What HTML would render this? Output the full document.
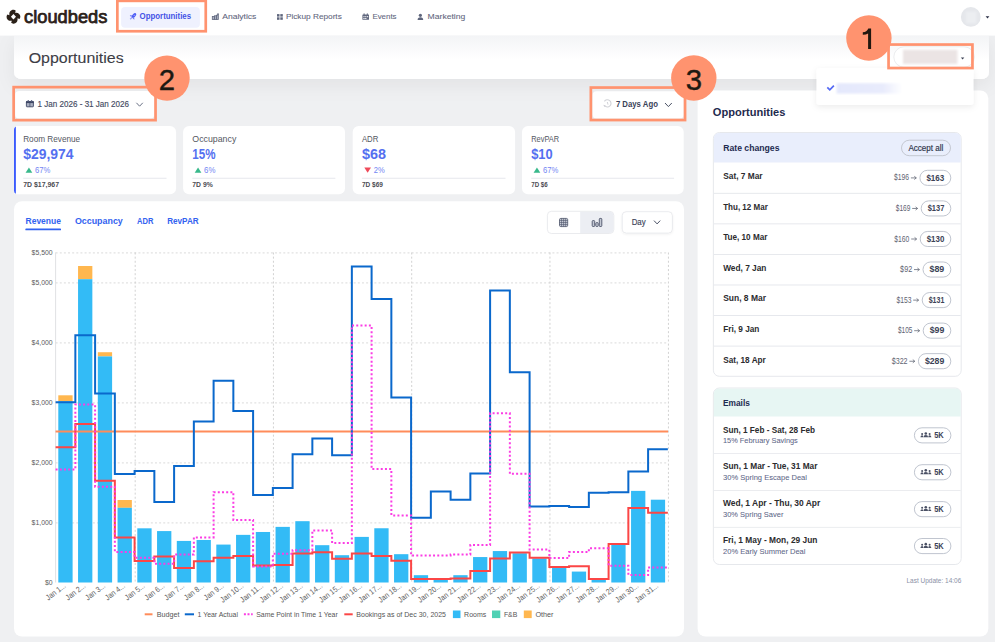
<!DOCTYPE html>
<html><head><meta charset="utf-8"><title>Opportunities</title>
<style>
html,body{margin:0;padding:0;background:#eff0f2;width:995px;height:642px;overflow:hidden;}
svg{display:block;font-family:"Liberation Sans", sans-serif;}
text{font-family:"Liberation Sans", sans-serif;}
</style></head>
<body>
<svg width="995" height="642" viewBox="0 0 995 642">
<defs><linearGradient id="hdrg" x1="0" y1="0" x2="0" y2="1"><stop offset="0" stop-color="#f3f4f6"/><stop offset="0.55" stop-color="#ffffff"/><stop offset="1" stop-color="#ffffff"/></linearGradient><linearGradient id="leftg" x1="0" y1="0" x2="0" y2="1"><stop offset="0" stop-color="#e9eaed"/><stop offset="1" stop-color="#eef0f3"/></linearGradient><linearGradient id="blurb" x1="0" y1="0" x2="1" y2="0"><stop offset="0" stop-color="#e4e8fc"/><stop offset="0.7" stop-color="#e8ebfc"/><stop offset="1" stop-color="#ffffff"/></linearGradient><filter id="sh1" x="-20%" y="-40%" width="140%" height="200%"><feDropShadow dx="0" dy="2" stdDeviation="3" flood-color="#000" flood-opacity="0.08"/></filter><filter id="sh2" x="-10%" y="-10%" width="120%" height="130%"><feDropShadow dx="0" dy="1" stdDeviation="1" flood-color="#000" flood-opacity="0.06"/></filter><filter id="shh" x="-5%" y="-50%" width="110%" height="250%"><feDropShadow dx="0" dy="6" stdDeviation="9" flood-color="#000" flood-opacity="0.06"/></filter><filter id="bl1"><feGaussianBlur stdDeviation="1.2"/></filter></defs>
<rect x="0.00" y="0.00" width="995.00" height="642.00" fill="#eff0f2" />
<path d="M14,35.6 H989 V71 Q989,79 981,79 H22 Q14,79 14,71 Z" fill="#fff" filter="url(#shh)"/>
<rect x="0.00" y="0.00" width="995.00" height="35.60" fill="#ffffff" />
<path d="M14,35.6 H989 V71 Q989,79 981,79 H22 Q14,79 14,71 Z" fill="url(#hdrg)"/>
<path transform="translate(13.45,16.75)" fill="#2b2119" fill-rule="evenodd" d="M-4.06,-2.0 C-4.50,-4.60 -2.60,-7.00 0.10,-6.90 C1.00,-6.85 1.80,-6.50 2.30,-6.00 L1.60,-4.10 L2.00,-4.06 C4.60,-4.50 7.00,-2.60 6.90,0.10 C6.85,1.00 6.50,1.80 6.00,2.30 L4.10,1.60 L4.06,2.00 C4.50,4.60 2.60,7.00 -0.10,6.90 C-1.00,6.85 -1.80,6.50 -2.30,6.00 L-1.60,4.10 L-2.00,4.06 C-4.60,4.50 -7.00,2.60 -6.90,-0.10 C-6.85,-1.00 -6.50,-1.80 -6.00,-2.30 L-4.10,-1.60 Z M0,-2.75 L2.55,0 L0,2.75 L-2.55,0 Z"/>
<text x="24.10" y="22.90" font-size="17.80" fill="#2b2119" textLength="83.30" lengthAdjust="spacingAndGlyphs" stroke="#2b2119" stroke-width="0.75" >cloudbeds</text>
<rect x="121.10" y="7.00" width="78.80" height="20.70" fill="#eff1fe" rx="4" />
<g transform="translate(132.9,16.6)"><ellipse cx="1.0" cy="-1.0" rx="3.0" ry="1.55" transform="rotate(-45 1.0 -1.0)" fill="#4d5cf5"/><path d="M-0.9,-1.3 L-3.1,-1.5 L-1.9,0.3 Z M1.3,0.9 L1.5,3.1 L-0.3,1.9 Z" fill="#6f7cf6"/><path d="M-0.6,0.6 L-2.7,2.7" stroke="#9aa3f8" stroke-width="1.3"/><circle cx="1.3" cy="-1.3" r="0.55" fill="#c9cffc"/></g>
<text x="139.60" y="19.40" font-size="8.60" fill="#4453e6" font-weight="bold" textLength="51.50" lengthAdjust="spacingAndGlyphs" >Opportunities</text>
<g fill="#aab0c0" stroke="#5f667d" stroke-width="0.8"><rect x="212.3" y="16.5" width="2.2" height="3.0"/><rect x="214.5" y="15.8" width="2.0" height="3.7"/><rect x="216.5" y="15.2" width="1.8" height="4.3"/></g><circle cx="218.0" cy="14.2" r="0.9" fill="#5f667d"/>
<text x="222.20" y="19.40" font-size="8.00" fill="#5f667d" textLength="34.20" lengthAdjust="spacingAndGlyphs" stroke="#5f667d" stroke-width="0.08" >Analytics</text>
<g fill="#5f667d"><rect x="277" y="14.1" width="2.5" height="2.5"/><rect x="280.3" y="14.1" width="2.5" height="2.5"/><rect x="277" y="17.3" width="2.5" height="2.5"/><rect x="280.3" y="17.3" width="2.5" height="2.5"/></g>
<text x="285.90" y="19.40" font-size="8.00" fill="#5f667d" textLength="55.90" lengthAdjust="spacingAndGlyphs" stroke="#5f667d" stroke-width="0.08" >Pickup Reports</text>
<g fill="#5f667d"><rect x="362.4" y="14.4" width="6.6" height="5.4" rx="0.6"/><rect x="363.6" y="13.4" width="1" height="1.6"/><rect x="366.8" y="13.4" width="1" height="1.6"/></g><g fill="#fff"><rect x="363.4" y="16.2" width="1.2" height="1"/><rect x="365.2" y="16.2" width="1.2" height="1"/><rect x="367" y="16.2" width="1.2" height="1"/><rect x="363.4" y="18" width="1.2" height="1"/><rect x="365.2" y="18" width="1.2" height="1"/></g>
<text x="372.40" y="19.40" font-size="8.00" fill="#5f667d" textLength="24.20" lengthAdjust="spacingAndGlyphs" stroke="#5f667d" stroke-width="0.08" >Events</text>
<g fill="#5f667d"><circle cx="420.4" cy="15.3" r="1.6"/><path d="M417.6,19.9 Q417.6,17.2 420.4,17.2 Q423.2,17.2 423.2,19.9 Z"/></g>
<text x="427.60" y="19.40" font-size="8.00" fill="#5f667d" textLength="37.70" lengthAdjust="spacingAndGlyphs" stroke="#5f667d" stroke-width="0.08" >Marketing</text>
<circle cx="970.8" cy="16.9" r="9.9" fill="#e5e7eb"/>
<rect x="966" y="11.5" width="10.5" height="12" fill="#eceef1" filter="url(#bl1)"/>
<path d="M985.6,16.3 L989.4,16.3 L987.5,18.6 Z" fill="#2a2f45"/>
<text x="28.70" y="62.90" font-size="14.30" fill="#3d3d45" textLength="95.00" lengthAdjust="spacingAndGlyphs" stroke="#3d3d45" stroke-width="0.1" >Opportunities</text>
<rect x="893.8" y="46.8" width="80.5" height="20.4" rx="10.2" fill="#ffffff" stroke="#e6e7ea" stroke-width="0.8"/>
<rect x="903" y="49.8" width="54.4" height="14.1" fill="#ebe4e4" filter="url(#bl1)"/>
<path d="M960.9,57.6 L964.3,57.6 L962.6,59.6 Z" fill="#3a3f52"/>
<rect x="15.20" y="91.00" width="139.00" height="27.60" fill="#ffffff" rx="4" filter="url(#sh2)"/>
<rect x="26.4" y="101.6" width="7.0" height="5.2" rx="0.5" fill="#a9afc0" stroke="#3f4866" stroke-width="0.9"/><rect x="26.0" y="101.2" width="7.8" height="1.9" fill="#3f4866"/><path d="M29.9,103 V106.8" stroke="#3f4866" stroke-width="0.7"/><rect x="27.6" y="100.0" width="1.3" height="1.4" fill="#6b7390"/><rect x="30.9" y="100.0" width="1.3" height="1.4" fill="#6b7390"/>
<text x="37.60" y="106.70" font-size="8.20" fill="#454c63" textLength="91.40" lengthAdjust="spacingAndGlyphs" stroke="#454c63" stroke-width="0.15" >1 Jan 2026 - 31 Jan 2026</text>
<path d="M136.4,102.8 L139.6,106.2 L142.8,102.8" fill="none" stroke="#6a7185" stroke-width="1"/>
<rect x="592.60" y="91.30" width="91.00" height="27.10" fill="#ffffff" rx="4" filter="url(#sh2)"/>
<path d="M604.4,101.4 A3.6,3.6 0 1 1 604.6,105.6" fill="none" stroke="#d2d3d8" stroke-width="1.1"/><path d="M603.2,104.8 L605.4,105.4 L604.6,107.0 Z" fill="#c8c9cf"/><path d="M607.3,102.0 L608.0,104.6" fill="none" stroke="#d2d3d8" stroke-width="1.0"/>
<text x="615.90" y="107.30" font-size="8.20" fill="#3a4259" font-weight="bold" textLength="42.00" lengthAdjust="spacingAndGlyphs" >7 Days Ago</text>
<path d="M665,103 L668.4,106.6 L671.8,103" fill="none" stroke="#4a5165" stroke-width="1"/>
<rect x="14.00" y="126.00" width="162.10" height="68.20" fill="#ffffff" rx="6" />
<text x="23.20" y="141.70" font-size="8.40" fill="#54575f" textLength="57.00" lengthAdjust="spacingAndGlyphs" >Room Revenue</text>
<text x="23.20" y="158.90" font-size="14.00" fill="#5470f0" font-weight="bold" textLength="50.30" lengthAdjust="spacingAndGlyphs" >$29,974</text>
<path d="M25.60,172.8 L28.95,167.4 L32.30,172.8 Z" fill="#38b98b"/>
<text x="35.00" y="172.80" font-size="8.50" fill="#7385f3" textLength="15.40" lengthAdjust="spacingAndGlyphs" >67%</text>
<rect x="23.20" y="177.8" width="143.30" height="0.8" fill="#dfe2e8"/>
<text x="23.20" y="186.90" font-size="7.50" fill="#4b4b52" font-weight="bold" textLength="35.80" lengthAdjust="spacingAndGlyphs" >7D $17,967</text>
<rect x="183.10" y="126.00" width="161.90" height="68.20" fill="#ffffff" rx="6" />
<text x="192.30" y="141.70" font-size="8.40" fill="#54575f" textLength="44.00" lengthAdjust="spacingAndGlyphs" >Occupancy</text>
<text x="192.30" y="158.90" font-size="14.00" fill="#5470f0" font-weight="bold" textLength="23.20" lengthAdjust="spacingAndGlyphs" >15%</text>
<path d="M194.70,172.8 L198.05,167.4 L201.40,172.8 Z" fill="#38b98b"/>
<text x="204.10" y="172.80" font-size="8.50" fill="#7385f3" textLength="11.40" lengthAdjust="spacingAndGlyphs" >6%</text>
<rect x="192.30" y="177.8" width="143.10" height="0.8" fill="#dfe2e8"/>
<text x="192.30" y="186.90" font-size="7.50" fill="#4b4b52" font-weight="bold" textLength="20.50" lengthAdjust="spacingAndGlyphs" >7D 9%</text>
<rect x="352.70" y="126.00" width="162.40" height="68.20" fill="#ffffff" rx="6" />
<text x="361.90" y="141.70" font-size="8.40" fill="#54575f" textLength="16.50" lengthAdjust="spacingAndGlyphs" >ADR</text>
<text x="361.90" y="158.90" font-size="14.00" fill="#5470f0" font-weight="bold" textLength="24.00" lengthAdjust="spacingAndGlyphs" >$68</text>
<path d="M364.30,167.6 L367.65,172.8 L371.00,167.6 Z" fill="#ef4a5a"/>
<text x="373.70" y="172.80" font-size="8.50" fill="#7385f3" textLength="11.00" lengthAdjust="spacingAndGlyphs" >2%</text>
<rect x="361.90" y="177.8" width="143.60" height="0.8" fill="#dfe2e8"/>
<text x="361.90" y="186.90" font-size="7.50" fill="#4b4b52" font-weight="bold" textLength="21.00" lengthAdjust="spacingAndGlyphs" >7D $69</text>
<rect x="522.00" y="126.00" width="161.70" height="68.20" fill="#ffffff" rx="6" />
<text x="531.20" y="141.70" font-size="8.40" fill="#54575f" textLength="28.00" lengthAdjust="spacingAndGlyphs" >RevPAR</text>
<text x="531.20" y="158.90" font-size="14.00" fill="#5470f0" font-weight="bold" textLength="21.50" lengthAdjust="spacingAndGlyphs" >$10</text>
<path d="M533.60,172.8 L536.95,167.4 L540.30,172.8 Z" fill="#38b98b"/>
<text x="543.00" y="172.80" font-size="8.50" fill="#7385f3" textLength="15.40" lengthAdjust="spacingAndGlyphs" >67%</text>
<rect x="531.20" y="177.8" width="142.90" height="0.8" fill="#dfe2e8"/>
<text x="531.20" y="186.90" font-size="7.50" fill="#4b4b52" font-weight="bold" textLength="16.50" lengthAdjust="spacingAndGlyphs" >7D $6</text>
<path d="M20,126 H16.5 Q14,126 14,128.5 V191.7 Q14,194.2 16.5,194.2 H20 Z" fill="#ffffff"/>
<path d="M15.9,126.4 Q14,127.2 14,129.5 V190.7 Q14,193.0 15.9,193.8 Z" fill="#3b5bfd"/>
<rect x="14.00" y="201.20" width="670.00" height="435.40" fill="#ffffff" rx="8" />
<text x="25.50" y="224.20" font-size="8.70" fill="#3262f0" font-weight="bold" textLength="35.50" lengthAdjust="spacingAndGlyphs" >Revenue</text>
<rect x="25.3" y="228.5" width="35.8" height="1.8" rx="0.9" fill="#3262f0"/>
<text x="74.90" y="224.20" font-size="8.70" fill="#3262f0" font-weight="bold" textLength="47.90" lengthAdjust="spacingAndGlyphs" >Occupancy</text>
<text x="137.10" y="224.20" font-size="8.70" fill="#3262f0" font-weight="bold" textLength="16.40" lengthAdjust="spacingAndGlyphs" >ADR</text>
<text x="167.20" y="224.20" font-size="8.70" fill="#3262f0" font-weight="bold" textLength="31.50" lengthAdjust="spacingAndGlyphs" >RevPAR</text>
<rect x="547.4" y="211.3" width="66.4" height="22.2" rx="4" fill="#ffffff" stroke="#e4e6ea" stroke-width="0.8"/>
<path d="M580.2,211.7 H609.8 Q613.4,211.7 613.4,215.3 V229.5 Q613.4,233.1 609.8,233.1 H580.2 Z" fill="#eceef3"/>
<rect x="559.5" y="218.4" width="8.2" height="8.2" rx="1.3" fill="#c9cdd7" stroke="#4d546a" stroke-width="0.8"/><path d="M561.55,218.4 V226.6 M563.6,218.4 V226.6 M565.65,218.4 V226.6 M559.5,220.45 H567.7 M559.5,222.5 H567.7 M559.5,224.55 H567.7" stroke="#4d546a" stroke-width="0.6"/>
<g fill="#c3c8d3" stroke="#4d546a" stroke-width="0.9"><rect x="592.2" y="220.6" width="2.5" height="5.9" rx="0.8"/><rect x="595.8" y="222.6" width="2.4" height="3.9" rx="0.8"/><rect x="599.3" y="218.4" width="2.5" height="8.1" rx="0.8"/></g>
<rect x="622.2" y="211.7" width="50.2" height="21.4" rx="4" fill="#ffffff" stroke="#e4e6ea" stroke-width="0.8" filter="url(#sh2)"/>
<text x="631.70" y="224.50" font-size="8.20" fill="#3d4459" textLength="14.00" lengthAdjust="spacingAndGlyphs" stroke="#3d4459" stroke-width="0.15" >Day</text>
<path d="M654,220.6 L657.1,223.9 L660.2,220.6" fill="none" stroke="#4a5165" stroke-width="1"/>
<path d="M55.60,522.90 H668" stroke="#e2e2e2" stroke-width="1.3" stroke-dasharray="2,2.14"/>
<path d="M55.60,462.90 H668" stroke="#e2e2e2" stroke-width="1.3" stroke-dasharray="2,2.14"/>
<path d="M55.60,402.90 H668" stroke="#e2e2e2" stroke-width="1.3" stroke-dasharray="2,2.14"/>
<path d="M55.60,342.90 H668" stroke="#e2e2e2" stroke-width="1.3" stroke-dasharray="2,2.14"/>
<path d="M55.60,282.90 H668" stroke="#e2e2e2" stroke-width="1.3" stroke-dasharray="2,2.14"/>
<path d="M55.60,252.90 H668" stroke="#e2e2e2" stroke-width="1.3" stroke-dasharray="2,2.14"/>
<path d="M135.20,252.50 V582.50" stroke="#cdcdcd" stroke-width="0.9" stroke-dasharray="2,2.14"/>
<path d="M273.45,252.50 V582.50" stroke="#cdcdcd" stroke-width="0.9" stroke-dasharray="2,2.14"/>
<path d="M411.70,252.50 V582.50" stroke="#cdcdcd" stroke-width="0.9" stroke-dasharray="2,2.14"/>
<path d="M549.95,252.50 V582.50" stroke="#cdcdcd" stroke-width="0.9" stroke-dasharray="2,2.14"/>
<path d="M668.45,252.50 V582.50" stroke="#cdcdcd" stroke-width="0.9" stroke-dasharray="2,2.14"/>
<path d="M55.60,252.50 V582.50" stroke="#d8d9dc" stroke-width="0.8"/>
<text x="52.60" y="585.00" font-size="7.00" fill="#5a5a5a" text-anchor="end" textLength="7.60" lengthAdjust="spacingAndGlyphs" >$0</text>
<text x="52.60" y="525.00" font-size="7.00" fill="#5a5a5a" text-anchor="end" textLength="21.00" lengthAdjust="spacingAndGlyphs" >$1,000</text>
<text x="52.60" y="465.00" font-size="7.00" fill="#5a5a5a" text-anchor="end" textLength="21.00" lengthAdjust="spacingAndGlyphs" >$2,000</text>
<text x="52.60" y="405.00" font-size="7.00" fill="#5a5a5a" text-anchor="end" textLength="21.00" lengthAdjust="spacingAndGlyphs" >$3,000</text>
<text x="52.60" y="345.00" font-size="7.00" fill="#5a5a5a" text-anchor="end" textLength="21.00" lengthAdjust="spacingAndGlyphs" >$4,000</text>
<text x="52.60" y="285.00" font-size="7.00" fill="#5a5a5a" text-anchor="end" textLength="21.00" lengthAdjust="spacingAndGlyphs" >$5,000</text>
<text x="52.60" y="255.00" font-size="7.00" fill="#5a5a5a" text-anchor="end" textLength="21.00" lengthAdjust="spacingAndGlyphs" >$5,500</text>
<rect x="58.30" y="395.30" width="14.3" height="6.00" fill="#ffb74f"/>
<rect x="58.30" y="401.30" width="14.3" height="181.20" fill="#33bbf6"/>
<rect x="78.05" y="266.00" width="14.3" height="13.20" fill="#ffb74f"/>
<rect x="78.05" y="279.20" width="14.3" height="303.30" fill="#33bbf6"/>
<rect x="97.80" y="352.22" width="14.3" height="4.20" fill="#ffb74f"/>
<rect x="97.80" y="356.42" width="14.3" height="226.08" fill="#33bbf6"/>
<rect x="117.55" y="500.00" width="14.3" height="7.80" fill="#ffb74f"/>
<rect x="117.55" y="507.80" width="14.3" height="74.70" fill="#33bbf6"/>
<rect x="137.30" y="528.32" width="14.3" height="54.18" fill="#33bbf6"/>
<rect x="157.05" y="531.08" width="14.3" height="51.42" fill="#33bbf6"/>
<rect x="176.80" y="540.92" width="14.3" height="41.58" fill="#33bbf6"/>
<rect x="196.55" y="539.96" width="14.3" height="42.54" fill="#33bbf6"/>
<rect x="216.30" y="544.58" width="14.3" height="37.92" fill="#33bbf6"/>
<rect x="236.05" y="534.86" width="14.3" height="47.64" fill="#33bbf6"/>
<rect x="255.80" y="531.98" width="14.3" height="50.52" fill="#33bbf6"/>
<rect x="275.55" y="526.88" width="14.3" height="55.62" fill="#33bbf6"/>
<rect x="295.30" y="521.18" width="14.3" height="61.32" fill="#33bbf6"/>
<rect x="315.05" y="545.18" width="14.3" height="37.32" fill="#33bbf6"/>
<rect x="334.80" y="555.20" width="14.3" height="27.30" fill="#33bbf6"/>
<rect x="354.55" y="536.90" width="14.3" height="45.60" fill="#33bbf6"/>
<rect x="374.30" y="528.26" width="14.3" height="54.24" fill="#33bbf6"/>
<rect x="394.05" y="554.18" width="14.3" height="28.32" fill="#33bbf6"/>
<rect x="413.80" y="575.18" width="14.3" height="7.32" fill="#33bbf6"/>
<rect x="433.55" y="579.62" width="14.3" height="2.88" fill="#33bbf6"/>
<rect x="453.30" y="575.18" width="14.3" height="7.32" fill="#33bbf6"/>
<rect x="473.05" y="557.06" width="14.3" height="25.44" fill="#33bbf6"/>
<rect x="492.80" y="551.06" width="14.3" height="31.44" fill="#33bbf6"/>
<rect x="512.55" y="553.22" width="14.3" height="29.28" fill="#33bbf6"/>
<rect x="532.30" y="558.38" width="14.3" height="24.12" fill="#33bbf6"/>
<rect x="552.05" y="568.04" width="14.3" height="14.46" fill="#33bbf6"/>
<rect x="571.80" y="571.58" width="14.3" height="10.92" fill="#33bbf6"/>
<rect x="591.55" y="579.98" width="14.3" height="2.52" fill="#33bbf6"/>
<rect x="611.30" y="543.92" width="14.3" height="38.58" fill="#33bbf6"/>
<rect x="631.05" y="490.88" width="14.3" height="91.62" fill="#33bbf6"/>
<rect x="650.80" y="499.70" width="14.3" height="82.80" fill="#33bbf6"/>
<path d="M55.60,431.4 H668" stroke="#ff8c5a" stroke-width="2"/>
<path d="M55.60,402.20 H75.35 V335.30 H95.10 V393.38 H114.85 V474.08 H134.60 V470.90 H154.35 V502.04 H174.10 V465.98 H193.85 V421.58 H213.60 V380.78 H233.35 V410.90 H253.10 V495.02 H272.85 V487.88 H292.60 V454.22 H312.35 V438.38 H332.10 V455.30 H351.85 V266.48 H371.60 V299.12 H391.35 V397.58 H411.10 V517.82 H430.85 V491.42 H450.60 V499.64 H470.35 V473.42 H490.10 V290.60 H509.85 V372.20 H529.60 V506.48 H549.35 V505.88 H569.10 V507.08 H588.85 V492.80 H608.60 V492.20 H628.35 V471.62 H648.10 V449.18 H667.85" fill="none" stroke="#0a68cc" stroke-width="2"/>
<path d="M55.60,447.20 H75.35 V423.98 H95.10 V480.68 H114.85 V537.38 H134.60 V561.08 H154.35 V556.58 H174.10 V568.10 H193.85 V561.32 H213.60 V557.78 H233.35 V555.92 H253.10 V565.58 H272.85 V564.92 H292.60 V553.40 H312.35 V552.32 H332.10 V558.80 H351.85 V553.40 H371.60 V555.98 H391.35 V560.72 H411.10 V579.02 H430.85 V579.02 H450.60 V578.42 H470.35 V571.10 H490.10 V558.62 H509.85 V552.56 H529.60 V557.72 H549.35 V567.02 H569.10 V566.30 H588.85 V579.08 H608.60 V543.92 H628.35 V508.10 H648.10 V512.72 H667.85" fill="none" stroke="#fb4646" stroke-width="2"/>
<path d="M55.60,469.52 H75.35 V404.60 H95.10 V486.68 H114.85 V551.90 H134.60 V557.84 H154.35 V563.72 H174.10 V554.54 H193.85 V537.38 H213.60 V492.14 H233.35 V520.04 H253.10 V566.48 H272.85 V553.82 H292.60 V550.22 H312.35 V530.48 H332.10 V543.02 H351.85 V325.58 H371.60 V469.10 H391.35 V515.42 H411.10 V555.38 H430.85 V555.38 H450.60 V554.48 H470.35 V544.94 H490.10 V413.30 H509.85 V473.78 H529.60 V549.62 H549.35 V558.02 H569.10 V552.02 H588.85 V548.18 H608.60 V565.70 H628.35 V575.00 H648.10 V567.50 H667.85" fill="none" stroke="#fb3de4" stroke-width="2" stroke-dasharray="2,2.2"/>
<text x="0" y="0" font-size="8.0" fill="#5c5c5c" text-anchor="end" textLength="22.83" lengthAdjust="spacingAndGlyphs" transform="translate(66.38,586.90) rotate(-37)">Jan 1...</text>
<text x="0" y="0" font-size="8.0" fill="#5c5c5c" text-anchor="end" textLength="22.83" lengthAdjust="spacingAndGlyphs" transform="translate(86.12,586.90) rotate(-37)">Jan 2...</text>
<text x="0" y="0" font-size="8.0" fill="#5c5c5c" text-anchor="end" textLength="22.83" lengthAdjust="spacingAndGlyphs" transform="translate(105.88,586.90) rotate(-37)">Jan 3...</text>
<text x="0" y="0" font-size="8.0" fill="#5c5c5c" text-anchor="end" textLength="22.83" lengthAdjust="spacingAndGlyphs" transform="translate(125.62,586.90) rotate(-37)">Jan 4...</text>
<text x="0" y="0" font-size="8.0" fill="#5c5c5c" text-anchor="end" textLength="22.83" lengthAdjust="spacingAndGlyphs" transform="translate(145.38,586.90) rotate(-37)">Jan 5...</text>
<text x="0" y="0" font-size="8.0" fill="#5c5c5c" text-anchor="end" textLength="22.83" lengthAdjust="spacingAndGlyphs" transform="translate(165.12,586.90) rotate(-37)">Jan 6...</text>
<text x="0" y="0" font-size="8.0" fill="#5c5c5c" text-anchor="end" textLength="22.83" lengthAdjust="spacingAndGlyphs" transform="translate(184.88,586.90) rotate(-37)">Jan 7...</text>
<text x="0" y="0" font-size="8.0" fill="#5c5c5c" text-anchor="end" textLength="22.83" lengthAdjust="spacingAndGlyphs" transform="translate(204.62,586.90) rotate(-37)">Jan 8...</text>
<text x="0" y="0" font-size="8.0" fill="#5c5c5c" text-anchor="end" textLength="22.83" lengthAdjust="spacingAndGlyphs" transform="translate(224.38,586.90) rotate(-37)">Jan 9...</text>
<text x="0" y="0" font-size="8.0" fill="#5c5c5c" text-anchor="end" textLength="26.70" lengthAdjust="spacingAndGlyphs" transform="translate(244.12,586.90) rotate(-37)">Jan 10...</text>
<text x="0" y="0" font-size="8.0" fill="#5c5c5c" text-anchor="end" textLength="26.70" lengthAdjust="spacingAndGlyphs" transform="translate(263.88,586.90) rotate(-37)">Jan 11...</text>
<text x="0" y="0" font-size="8.0" fill="#5c5c5c" text-anchor="end" textLength="26.70" lengthAdjust="spacingAndGlyphs" transform="translate(283.62,586.90) rotate(-37)">Jan 12...</text>
<text x="0" y="0" font-size="8.0" fill="#5c5c5c" text-anchor="end" textLength="26.70" lengthAdjust="spacingAndGlyphs" transform="translate(303.38,586.90) rotate(-37)">Jan 13...</text>
<text x="0" y="0" font-size="8.0" fill="#5c5c5c" text-anchor="end" textLength="26.70" lengthAdjust="spacingAndGlyphs" transform="translate(323.12,586.90) rotate(-37)">Jan 14...</text>
<text x="0" y="0" font-size="8.0" fill="#5c5c5c" text-anchor="end" textLength="26.70" lengthAdjust="spacingAndGlyphs" transform="translate(342.88,586.90) rotate(-37)">Jan 15...</text>
<text x="0" y="0" font-size="8.0" fill="#5c5c5c" text-anchor="end" textLength="26.70" lengthAdjust="spacingAndGlyphs" transform="translate(362.62,586.90) rotate(-37)">Jan 16...</text>
<text x="0" y="0" font-size="8.0" fill="#5c5c5c" text-anchor="end" textLength="26.70" lengthAdjust="spacingAndGlyphs" transform="translate(382.38,586.90) rotate(-37)">Jan 17...</text>
<text x="0" y="0" font-size="8.0" fill="#5c5c5c" text-anchor="end" textLength="26.70" lengthAdjust="spacingAndGlyphs" transform="translate(402.12,586.90) rotate(-37)">Jan 18...</text>
<text x="0" y="0" font-size="8.0" fill="#5c5c5c" text-anchor="end" textLength="26.70" lengthAdjust="spacingAndGlyphs" transform="translate(421.88,586.90) rotate(-37)">Jan 19...</text>
<text x="0" y="0" font-size="8.0" fill="#5c5c5c" text-anchor="end" textLength="26.70" lengthAdjust="spacingAndGlyphs" transform="translate(441.62,586.90) rotate(-37)">Jan 20...</text>
<text x="0" y="0" font-size="8.0" fill="#5c5c5c" text-anchor="end" textLength="26.70" lengthAdjust="spacingAndGlyphs" transform="translate(461.38,586.90) rotate(-37)">Jan 21...</text>
<text x="0" y="0" font-size="8.0" fill="#5c5c5c" text-anchor="end" textLength="26.70" lengthAdjust="spacingAndGlyphs" transform="translate(481.12,586.90) rotate(-37)">Jan 22...</text>
<text x="0" y="0" font-size="8.0" fill="#5c5c5c" text-anchor="end" textLength="26.70" lengthAdjust="spacingAndGlyphs" transform="translate(500.88,586.90) rotate(-37)">Jan 23...</text>
<text x="0" y="0" font-size="8.0" fill="#5c5c5c" text-anchor="end" textLength="26.70" lengthAdjust="spacingAndGlyphs" transform="translate(520.62,586.90) rotate(-37)">Jan 24...</text>
<text x="0" y="0" font-size="8.0" fill="#5c5c5c" text-anchor="end" textLength="26.70" lengthAdjust="spacingAndGlyphs" transform="translate(540.38,586.90) rotate(-37)">Jan 25...</text>
<text x="0" y="0" font-size="8.0" fill="#5c5c5c" text-anchor="end" textLength="26.70" lengthAdjust="spacingAndGlyphs" transform="translate(560.12,586.90) rotate(-37)">Jan 26...</text>
<text x="0" y="0" font-size="8.0" fill="#5c5c5c" text-anchor="end" textLength="26.70" lengthAdjust="spacingAndGlyphs" transform="translate(579.88,586.90) rotate(-37)">Jan 27...</text>
<text x="0" y="0" font-size="8.0" fill="#5c5c5c" text-anchor="end" textLength="26.70" lengthAdjust="spacingAndGlyphs" transform="translate(599.62,586.90) rotate(-37)">Jan 28...</text>
<text x="0" y="0" font-size="8.0" fill="#5c5c5c" text-anchor="end" textLength="26.70" lengthAdjust="spacingAndGlyphs" transform="translate(619.38,586.90) rotate(-37)">Jan 29...</text>
<text x="0" y="0" font-size="8.0" fill="#5c5c5c" text-anchor="end" textLength="26.70" lengthAdjust="spacingAndGlyphs" transform="translate(639.12,586.90) rotate(-37)">Jan 30...</text>
<text x="0" y="0" font-size="8.0" fill="#5c5c5c" text-anchor="end" textLength="26.70" lengthAdjust="spacingAndGlyphs" transform="translate(658.88,586.90) rotate(-37)">Jan 31...</text>
<path d="M144.7,614.3 H152.5" stroke="#ff8c5a" stroke-width="2"/>
<text x="156.70" y="616.90" font-size="7.40" fill="#555" textLength="22.80" lengthAdjust="spacingAndGlyphs" >Budget</text>
<path d="M184.8,614.3 H194" stroke="#0a68cc" stroke-width="2"/>
<text x="197.50" y="616.90" font-size="7.40" fill="#555" textLength="40.50" lengthAdjust="spacingAndGlyphs" >1 Year Actual</text>
<path d="M243.9,614.3 H252.7" stroke="#fb3de4" stroke-width="2" stroke-dasharray="2,1.6"/>
<text x="256.20" y="616.90" font-size="7.40" fill="#555" textLength="81.60" lengthAdjust="spacingAndGlyphs" >Same Point in Time 1 Year</text>
<path d="M344.3,614.3 H352.7" stroke="#fb4646" stroke-width="2"/>
<text x="356.30" y="616.90" font-size="7.40" fill="#555" textLength="89.70" lengthAdjust="spacingAndGlyphs" >Bookings as of Dec 30, 2025</text>
<rect x="452.90" y="610.50" width="7.60" height="7.60" fill="#33bbf6" />
<text x="464.10" y="616.90" font-size="7.40" fill="#555" textLength="22.10" lengthAdjust="spacingAndGlyphs" >Rooms</text>
<rect x="492.00" y="610.50" width="8.30" height="7.60" fill="#4fd1b4" />
<text x="503.90" y="616.90" font-size="7.40" fill="#555" textLength="13.40" lengthAdjust="spacingAndGlyphs" >F&amp;B</text>
<rect x="523.80" y="610.50" width="7.90" height="7.60" fill="#ffb74f" />
<text x="535.40" y="616.90" font-size="7.40" fill="#555" textLength="18.10" lengthAdjust="spacingAndGlyphs" >Other</text>
<rect x="697.60" y="90.40" width="290.70" height="546.20" fill="#ffffff" rx="8" />
<text x="712.80" y="115.50" font-size="11.60" fill="#1e2a4d" font-weight="bold" textLength="72.50" lengthAdjust="spacingAndGlyphs" >Opportunities</text>
<rect x="713.4" y="132.5" width="247.8" height="243.8" rx="6" fill="#ffffff" stroke="#e3e5ea" stroke-width="0.9"/>
<path d="M713.85,162.4 V138.5 Q713.85,132.95 719.4,132.95 H955.2 Q960.75,132.95 960.75,138.5 V162.4 Z" fill="#e9eefc"/>
<text x="723.20" y="150.90" font-size="9.00" fill="#1e2b50" font-weight="bold" textLength="56.30" lengthAdjust="spacingAndGlyphs" >Rate changes</text>
<rect x="901.5" y="140.2" width="49" height="15.5" rx="7.75" fill="none" stroke="#bfc3cc" stroke-width="0.9"/>
<text x="908.40" y="150.50" font-size="8.20" fill="#2d3448" textLength="35.00" lengthAdjust="spacingAndGlyphs" stroke="#2d3448" stroke-width="0.15" >Accept all</text>
<text x="723.20" y="179.20" font-size="8.70" fill="#2b2b2e" font-weight="bold" textLength="39.40" lengthAdjust="spacingAndGlyphs" >Sat, 7 Mar</text>
<rect x="919.90" y="170.30" width="30.90" height="15.1" rx="7.55" fill="none" stroke="#b9bec9" stroke-width="0.9"/>
<text x="944.30" y="180.70" font-size="8.30" fill="#3b4256" font-weight="bold" text-anchor="end" textLength="17.90" lengthAdjust="spacingAndGlyphs" >$163</text>
<path d="M910.90,177.90 H916.30 M914.30,176.30 L916.30,177.90 L914.30,179.50" fill="none" stroke="#666b78" stroke-width="0.8"/>
<text x="909.10" y="180.40" font-size="8.30" fill="#5f6472" text-anchor="end" textLength="15.10" lengthAdjust="spacingAndGlyphs" >$196</text>
<rect x="713.9" y="192.86" width="246.8" height="0.9" fill="#e4e6eb"/>
<text x="723.20" y="209.76" font-size="8.70" fill="#2b2b2e" font-weight="bold" textLength="44.60" lengthAdjust="spacingAndGlyphs" >Thu, 12 Mar</text>
<rect x="921.20" y="200.86" width="29.60" height="15.1" rx="7.55" fill="none" stroke="#b9bec9" stroke-width="0.9"/>
<text x="944.30" y="211.26" font-size="8.30" fill="#3b4256" font-weight="bold" text-anchor="end" textLength="16.60" lengthAdjust="spacingAndGlyphs" >$137</text>
<path d="M912.20,208.46 H917.60 M915.60,206.86 L917.60,208.46 L915.60,210.06" fill="none" stroke="#666b78" stroke-width="0.8"/>
<text x="910.40" y="210.96" font-size="8.30" fill="#5f6472" text-anchor="end" textLength="14.60" lengthAdjust="spacingAndGlyphs" >$169</text>
<rect x="713.9" y="223.41" width="246.8" height="0.9" fill="#e4e6eb"/>
<text x="723.20" y="240.31" font-size="8.70" fill="#2b2b2e" font-weight="bold" textLength="44.20" lengthAdjust="spacingAndGlyphs" >Tue, 10 Mar</text>
<rect x="920.20" y="231.41" width="30.60" height="15.1" rx="7.55" fill="none" stroke="#b9bec9" stroke-width="0.9"/>
<text x="944.30" y="241.81" font-size="8.30" fill="#3b4256" font-weight="bold" text-anchor="end" textLength="17.60" lengthAdjust="spacingAndGlyphs" >$130</text>
<path d="M911.20,239.01 H916.60 M914.60,237.41 L916.60,239.01 L914.60,240.61" fill="none" stroke="#666b78" stroke-width="0.8"/>
<text x="909.40" y="241.51" font-size="8.30" fill="#5f6472" text-anchor="end" textLength="15.10" lengthAdjust="spacingAndGlyphs" >$160</text>
<rect x="713.9" y="253.97" width="246.8" height="0.9" fill="#e4e6eb"/>
<text x="723.20" y="270.87" font-size="8.70" fill="#2b2b2e" font-weight="bold" textLength="43.20" lengthAdjust="spacingAndGlyphs" >Wed, 7 Jan</text>
<rect x="923.00" y="261.97" width="27.80" height="15.1" rx="7.55" fill="none" stroke="#b9bec9" stroke-width="0.9"/>
<text x="944.30" y="272.37" font-size="8.30" fill="#3b4256" font-weight="bold" text-anchor="end" textLength="14.80" lengthAdjust="spacingAndGlyphs" >$89</text>
<path d="M914.00,269.57 H919.40 M917.40,267.97 L919.40,269.57 L917.40,271.17" fill="none" stroke="#666b78" stroke-width="0.8"/>
<text x="912.20" y="272.07" font-size="8.30" fill="#5f6472" text-anchor="end" textLength="12.10" lengthAdjust="spacingAndGlyphs" >$92</text>
<rect x="713.9" y="284.53" width="246.8" height="0.9" fill="#e4e6eb"/>
<text x="723.20" y="301.43" font-size="8.70" fill="#2b2b2e" font-weight="bold" textLength="42.80" lengthAdjust="spacingAndGlyphs" >Sun, 8 Mar</text>
<rect x="922.20" y="292.53" width="28.60" height="15.1" rx="7.55" fill="none" stroke="#b9bec9" stroke-width="0.9"/>
<text x="944.30" y="302.93" font-size="8.30" fill="#3b4256" font-weight="bold" text-anchor="end" textLength="15.60" lengthAdjust="spacingAndGlyphs" >$131</text>
<path d="M913.20,300.13 H918.60 M916.60,298.53 L918.60,300.13 L916.60,301.73" fill="none" stroke="#666b78" stroke-width="0.8"/>
<text x="911.40" y="302.63" font-size="8.30" fill="#5f6472" text-anchor="end" textLength="15.00" lengthAdjust="spacingAndGlyphs" >$153</text>
<rect x="713.9" y="315.09" width="246.8" height="0.9" fill="#e4e6eb"/>
<text x="723.20" y="331.99" font-size="8.70" fill="#2b2b2e" font-weight="bold" textLength="36.20" lengthAdjust="spacingAndGlyphs" >Fri, 9 Jan</text>
<rect x="923.20" y="323.09" width="27.60" height="15.1" rx="7.55" fill="none" stroke="#b9bec9" stroke-width="0.9"/>
<text x="944.30" y="333.49" font-size="8.30" fill="#3b4256" font-weight="bold" text-anchor="end" textLength="14.60" lengthAdjust="spacingAndGlyphs" >$99</text>
<path d="M914.20,330.69 H919.60 M917.60,329.09 L919.60,330.69 L917.60,332.29" fill="none" stroke="#666b78" stroke-width="0.8"/>
<text x="912.40" y="333.19" font-size="8.30" fill="#5f6472" text-anchor="end" textLength="14.50" lengthAdjust="spacingAndGlyphs" >$105</text>
<rect x="713.9" y="345.64" width="246.8" height="0.9" fill="#e4e6eb"/>
<text x="723.20" y="362.54" font-size="8.70" fill="#2b2b2e" font-weight="bold" textLength="42.60" lengthAdjust="spacingAndGlyphs" >Sat, 18 Apr</text>
<rect x="918.40" y="353.64" width="32.40" height="15.1" rx="7.55" fill="none" stroke="#b9bec9" stroke-width="0.9"/>
<text x="944.30" y="364.04" font-size="8.30" fill="#3b4256" font-weight="bold" text-anchor="end" textLength="19.40" lengthAdjust="spacingAndGlyphs" >$289</text>
<path d="M909.40,361.24 H914.80 M912.80,359.64 L914.80,361.24 L912.80,362.84" fill="none" stroke="#666b78" stroke-width="0.8"/>
<text x="907.60" y="363.74" font-size="8.30" fill="#5f6472" text-anchor="end" textLength="15.90" lengthAdjust="spacingAndGlyphs" >$322</text>
<rect x="713.4" y="388.0" width="247.8" height="176.5" rx="6" fill="#ffffff" stroke="#e3e5ea" stroke-width="0.9"/>
<path d="M713.85,416.6 V394 Q713.85,388.45 719.4,388.45 H955.2 Q960.75,388.45 960.75,394 V416.6 Z" fill="#e7f6f3"/>
<text x="723.00" y="405.60" font-size="8.80" fill="#1e2b50" font-weight="bold" textLength="26.90" lengthAdjust="spacingAndGlyphs" >Emails</text>
<text x="723.00" y="432.50" font-size="8.40" fill="#2b2b2e" font-weight="bold" textLength="92.00" lengthAdjust="spacingAndGlyphs" >Sun, 1 Feb - Sat, 28 Feb</text>
<text x="723.00" y="443.00" font-size="7.80" fill="#5d6687" textLength="74.80" lengthAdjust="spacingAndGlyphs" stroke="#5d6687" stroke-width="0.05" >15% February Savings</text>
<rect x="914.4" y="427.80" width="36.5" height="15.1" rx="7.55" fill="none" stroke="#b9bec9" stroke-width="0.9"/>
<g fill="#4a5064" transform="translate(2.6,-0.3)"><circle cx="923.2" cy="433.75" r="1.3"/><path d="M920.9,437.55 Q920.9,435.35 923.2,435.35 Q925.5,435.35 925.5,437.55 Z"/><circle cx="927.0" cy="434.35" r="1.0"/><path d="M925.6,437.55 Q925.8,435.65 927.0,435.65 Q928.6,435.65 928.8,437.55 Z"/><circle cx="919.5" cy="434.35" r="1.0"/><path d="M917.8,437.55 Q918,435.65 919.5,435.65 Q920.6,435.65 920.8,437.55 Z"/></g>
<text x="943.80" y="437.90" font-size="8.80" fill="#3b4256" font-weight="bold" text-anchor="end" textLength="9.60" lengthAdjust="spacingAndGlyphs" >5K</text>
<rect x="713.9" y="453.10" width="246.8" height="0.8" fill="#e6e8ec"/>
<text x="723.00" y="469.40" font-size="8.40" fill="#2b2b2e" font-weight="bold" textLength="94.40" lengthAdjust="spacingAndGlyphs" >Sun, 1 Mar - Tue, 31 Mar</text>
<text x="723.00" y="479.90" font-size="7.80" fill="#5d6687" textLength="84.00" lengthAdjust="spacingAndGlyphs" stroke="#5d6687" stroke-width="0.05" >30% Spring Escape Deal</text>
<rect x="914.4" y="464.70" width="36.5" height="15.1" rx="7.55" fill="none" stroke="#b9bec9" stroke-width="0.9"/>
<g fill="#4a5064" transform="translate(2.6,-0.3)"><circle cx="923.2" cy="470.65" r="1.3"/><path d="M920.9,474.45 Q920.9,472.25 923.2,472.25 Q925.5,472.25 925.5,474.45 Z"/><circle cx="927.0" cy="471.25" r="1.0"/><path d="M925.6,474.45 Q925.8,472.55 927.0,472.55 Q928.6,472.55 928.8,474.45 Z"/><circle cx="919.5" cy="471.25" r="1.0"/><path d="M917.8,474.45 Q918,472.55 919.5,472.55 Q920.6,472.55 920.8,474.45 Z"/></g>
<text x="943.80" y="474.80" font-size="8.80" fill="#3b4256" font-weight="bold" text-anchor="end" textLength="9.60" lengthAdjust="spacingAndGlyphs" >5K</text>
<rect x="713.9" y="490.00" width="246.8" height="0.8" fill="#e6e8ec"/>
<text x="723.00" y="506.30" font-size="8.40" fill="#2b2b2e" font-weight="bold" textLength="97.30" lengthAdjust="spacingAndGlyphs" >Wed, 1 Apr - Thu, 30 Apr</text>
<text x="723.00" y="516.80" font-size="7.80" fill="#5d6687" textLength="60.40" lengthAdjust="spacingAndGlyphs" stroke="#5d6687" stroke-width="0.05" >30% Spring Saver</text>
<rect x="914.4" y="501.60" width="36.5" height="15.1" rx="7.55" fill="none" stroke="#b9bec9" stroke-width="0.9"/>
<g fill="#4a5064" transform="translate(2.6,-0.3)"><circle cx="923.2" cy="507.55" r="1.3"/><path d="M920.9,511.35 Q920.9,509.15 923.2,509.15 Q925.5,509.15 925.5,511.35 Z"/><circle cx="927.0" cy="508.15" r="1.0"/><path d="M925.6,511.35 Q925.8,509.45 927.0,509.45 Q928.6,509.45 928.8,511.35 Z"/><circle cx="919.5" cy="508.15" r="1.0"/><path d="M917.8,511.35 Q918,509.45 919.5,509.45 Q920.6,509.45 920.8,511.35 Z"/></g>
<text x="943.80" y="511.70" font-size="8.80" fill="#3b4256" font-weight="bold" text-anchor="end" textLength="9.60" lengthAdjust="spacingAndGlyphs" >5K</text>
<rect x="713.9" y="526.90" width="246.8" height="0.8" fill="#e6e8ec"/>
<text x="723.00" y="543.20" font-size="8.40" fill="#2b2b2e" font-weight="bold" textLength="94.40" lengthAdjust="spacingAndGlyphs" >Fri, 1 May - Mon, 29 Jun</text>
<text x="723.00" y="553.70" font-size="7.80" fill="#5d6687" textLength="82.50" lengthAdjust="spacingAndGlyphs" stroke="#5d6687" stroke-width="0.05" >20% Early Summer Deal</text>
<rect x="914.4" y="538.50" width="36.5" height="15.1" rx="7.55" fill="none" stroke="#b9bec9" stroke-width="0.9"/>
<g fill="#4a5064" transform="translate(2.6,-0.3)"><circle cx="923.2" cy="544.45" r="1.3"/><path d="M920.9,548.25 Q920.9,546.05 923.2,546.05 Q925.5,546.05 925.5,548.25 Z"/><circle cx="927.0" cy="545.05" r="1.0"/><path d="M925.6,548.25 Q925.8,546.35 927.0,546.35 Q928.6,546.35 928.8,548.25 Z"/><circle cx="919.5" cy="545.05" r="1.0"/><path d="M917.8,548.25 Q918,546.35 919.5,546.35 Q920.6,546.35 920.8,548.25 Z"/></g>
<text x="943.80" y="548.60" font-size="8.80" fill="#3b4256" font-weight="bold" text-anchor="end" textLength="9.60" lengthAdjust="spacingAndGlyphs" >5K</text>
<text x="961.30" y="583.20" font-size="6.50" fill="#8a90a6" text-anchor="end" textLength="54.80" lengthAdjust="spacingAndGlyphs" >Last Update: 14:06</text>
<rect x="816.5" y="68.2" width="157" height="36.7" rx="3" fill="#ffffff" filter="url(#sh1)"/>
<path d="M827.3,87.4 L829.8,89.9 L833.9,85.6" fill="none" stroke="#5469f4" stroke-width="1.7"/>
<rect x="836.6" y="83.2" width="66" height="10.4" fill="url(#blurb)" filter="url(#bl1)"/>
<rect x="117.35" y="0.85" width="88.40" height="30.40" fill="none" stroke="#ff936f" stroke-width="2.7"/>
<rect x="888.55" y="44.55" width="83.90" height="23.50" fill="none" stroke="#ff936f" stroke-width="2.7"/>
<rect x="13.65" y="87.15" width="141.90" height="33.00" fill="none" stroke="#ff936f" stroke-width="2.7"/>
<rect x="590.85" y="87.55" width="94.20" height="32.50" fill="none" stroke="#ff936f" stroke-width="2.7"/>
<circle cx="868.9" cy="38.0" r="22.7" fill="#ff936f"/>
<path d="M871.10,28.40 V49.00 H868.10 V33.40 Q866.30,34.70 862.80,34.80 V32.30 Q866.90,32.00 868.30,28.40 Z" fill="#21170f"/>
<circle cx="167.0" cy="78.1" r="22.7" fill="#ff936f"/>
<text x="167.00" y="89.80" font-size="29.30" fill="#1d1912" text-anchor="middle" stroke="#1d1912" stroke-width="0.4" >2</text>
<circle cx="693.8" cy="78.0" r="22.7" fill="#ff936f"/>
<text x="693.80" y="89.70" font-size="29.30" fill="#1d1912" text-anchor="middle" stroke="#1d1912" stroke-width="0.4" >3</text>
</svg>
</body></html>
